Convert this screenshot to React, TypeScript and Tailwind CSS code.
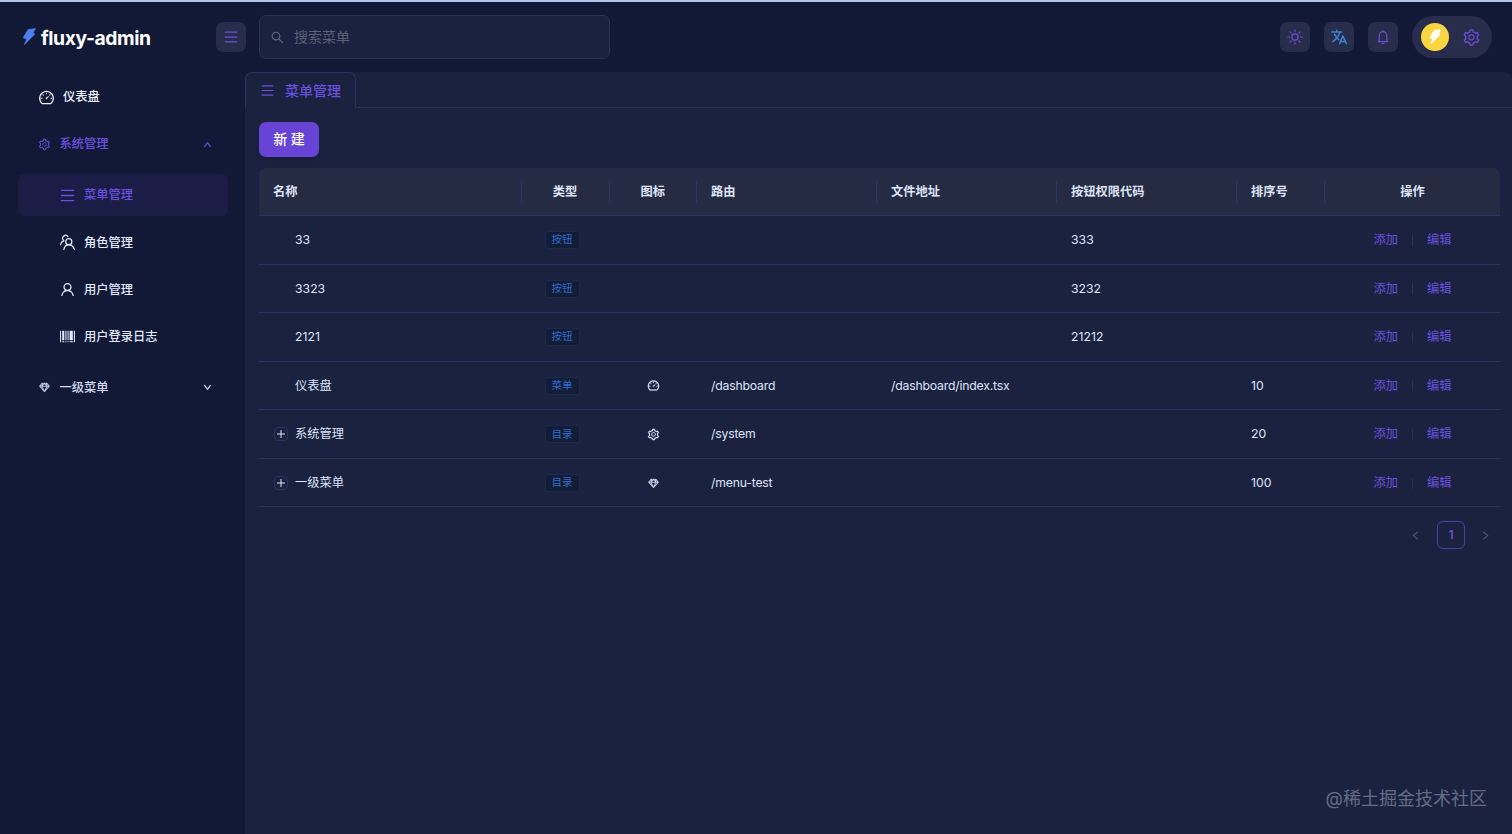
import React from 'react'
import { clsx } from 'clsx'
import {
    AiOutlineBarcode,
    AiOutlineDashboard,
    AiOutlineDown,
    AiOutlineLeft,
    AiOutlineMenu,
    AiOutlineRight,
    AiOutlineSearch,
    AiOutlineSetting,
    AiOutlineSketch,
    AiOutlineUp,
    AiOutlineUser,
} from 'react-icons/ai'
import { IoLanguageOutline } from 'react-icons/io5'

interface IconProps {
    className?: string
}

interface MenuRow {
    name: string
    type: string
    icon?: React.ComponentType<IconProps>
    route?: string
    file?: string
    code?: string
    order?: number
    expandable?: boolean
}

const rows: MenuRow[] = [
    { name: '33', type: '按钮', code: '333' },
    { name: '3323', type: '按钮', code: '3232' },
    { name: '2121', type: '按钮', code: '21212' },
    { name: '仪表盘', type: '菜单', icon: AiOutlineDashboard, route: '/dashboard', file: '/dashboard/index.tsx', order: 10 },
    { name: '系统管理', type: '目录', icon: AiOutlineSetting, route: '/system', order: 20, expandable: true },
    { name: '一级菜单', type: '目录', icon: AiOutlineSketch, route: '/menu-test', order: 100, expandable: true },
]

const columns = [
    { title: '名称', align: 'pl-[14px]' },
    { title: '类型', align: 'text-center' },
    { title: '图标', align: 'text-center' },
    { title: '路由', align: 'pl-[14px]' },
    { title: '文件地址', align: 'pl-[14px]' },
    { title: '按钮权限代码', align: 'pl-[14px]' },
    { title: '排序号', align: 'pl-[14px]' },
    { title: '操作', align: 'text-center' },
]

const gridCols = 'grid grid-cols-[262.5px_88px_87.5px_180px_180px_180px_88px_1fr] items-center'

const BoltIcon: React.FC<IconProps> = ({ className }) => (
    <svg viewBox="0 0 14 18" fill="currentColor" stroke="currentColor" strokeWidth="0.5" strokeLinejoin="round" className={className}>
        <path d="M6 1.4 13.6.6 11 5.3 13 6.1 2 17 4.7 11.3 1.2 9.8Z" />
    </svg>
)

const RoleIcon: React.FC<IconProps> = ({ className }) => (
    <svg viewBox="0 0 16 16" fill="none" stroke="currentColor" strokeWidth="1.2" strokeLinecap="round" className={className}>
        <circle cx="9.2" cy="7.2" r="2.9" />
        <path d="M4.6 14.6c.4-2.700 2.200-4.400 4.600-4.400s4.400 1.700 5.400 4.400" />
        <path d="M8.400 2.400A2.600 2.600 0 1 0 4 5.700L4.500 6.400C2.800 7 1.700 8.200 1.400 9.900" />
    </svg>
)

const SunIcon: React.FC<IconProps> = ({ className }) => (
    <svg viewBox="0 0 16 16" fill="none" stroke="currentColor" strokeWidth="1.2" strokeLinecap="round" className={className}>
        <circle cx="8" cy="8" r="3.1" />
        <path d="M8 .8v1.800M8 13.400v1.800M.8 8h1.800M13.400 8h1.800M2.900 2.900l1.300 1.300M11.800 11.800l1.300 1.300M2.900 13.100l1.300-1.300M11.800 4.200l1.300-1.300" />
    </svg>
)

const BellIcon: React.FC<IconProps> = ({ className }) => (
    <svg viewBox="0 0 16 16" fill="none" stroke="currentColor" strokeWidth="1.2" strokeLinejoin="round" strokeLinecap="round" className={className}>
        <path d="M3.200 12.700h9.600M4.200 12.500V6.500a3.800 3.800 0 0 1 7.600 0v6M8 2.500V1.700M7 14.500h2" />
    </svg>
)

const IconButton: React.FC<{ children: React.ReactNode }> = ({ children }) => (
    <button className="flex size-[30px] items-center justify-center rounded-[7px] bg-[#282d4b] text-[#6b4fde]">
        {children}
    </button>
)

const Header = () => (
    <header className="flex h-[70px] shrink-0 items-center pr-[20px]">
        <div className="flex w-[215.5px] items-center pl-[22px]">
            <BoltIcon className="h-[18px] w-[14px] text-[#4d80f0]" />
            <h1 className="ml-[5px] pt-px text-[19.3px] leading-6 font-bold tracking-[-0.4px] text-white">fluxy-admin</h1>
        </div>
        <IconButton>
            <AiOutlineMenu className="size-4" />
        </IconButton>
        <div className="ml-[13.5px] flex h-[44px] w-[351px] items-center rounded-[7px] border border-[#2b3150] bg-[#1a223f] pl-[10px]">
            <AiOutlineSearch className="size-[15px] text-[#62667a]" />
            <span className="ml-[9px] text-sm text-[#5c6075]">搜索菜单</span>
        </div>
        <div className="ml-auto flex items-center gap-[14px]">
            <IconButton>
                <SunIcon className="size-4" />
            </IconButton>
            <IconButton>
                <IoLanguageOutline className="size-[18px] text-[#3d84d2] [&_path]:[stroke-width:42]" />
            </IconButton>
            <IconButton>
                <BellIcon className="size-4" />
            </IconButton>
            <div className="flex h-[42px] w-[80px] items-center rounded-full bg-[#282d4b] pl-[9px]">
                <div className="flex size-7 items-center justify-center rounded-full bg-[#fbd541]">
                    <BoltIcon className="h-4 w-3 stroke-1 text-white" />
                </div>
                <AiOutlineSetting className="ml-[13px] size-[19px] text-[#6b4fde]" />
            </div>
        </div>
    </header>
)

interface MenuItemProps {
    icon: React.ComponentType<IconProps>
    label: string
    active?: boolean
}

const SubMenuItem: React.FC<MenuItemProps> = ({ icon: Icon, label, active }) => (
    <li
        className={clsx(
            'flex h-[42px] items-center rounded-[7px] pl-[41px]',
            active ? 'bg-[#1b1d46] text-[#6b4fde]' : 'text-[#e1e6f8]'
        )}
    >
        <Icon className="size-[17px]" />
        <span className="ml-[8px] pt-px">{label}</span>
    </li>
)

const Sidebar = () => (
    <nav className="w-[245px] shrink-0 pr-[17px] pl-[18px] text-[12.25px] font-medium">
        <div className="mt-[4px] flex h-[42px] items-center pl-5 text-[#f0f3fd]">
            <AiOutlineDashboard className="size-[17px]" />
            <span className="ml-[8px] pt-px">仪表盘</span>
        </div>
        <div className="mt-[5.5px] flex h-[42px] items-center pl-5 text-[#6b4fde]">
            <AiOutlineSetting className="size-[13px]" />
            <span className="ml-[8.5px]">系统管理</span>
            <AiOutlineUp className="mr-[16px] ml-auto size-[9px] stroke-[60]" />
        </div>
        <ul className="mt-[8.5px] flex flex-col gap-[5.3px]">
            <SubMenuItem icon={AiOutlineMenu} label="菜单管理" active />
            <SubMenuItem icon={RoleIcon} label="角色管理" />
            <SubMenuItem icon={AiOutlineUser} label="用户管理" />
            <SubMenuItem icon={AiOutlineBarcode} label="用户登录日志" />
        </ul>
        <div className="mt-[8.5px] flex h-[42px] items-center pl-5 text-[#d5dbf3]">
            <AiOutlineSketch className="size-[13px] stroke-[20]" />
            <span className="ml-[8.5px] pt-px">一级菜单</span>
            <AiOutlineDown className="mr-[16px] ml-auto size-[9px] stroke-[70]" />
        </div>
    </nav>
)

const TableRow: React.FC<{ row: MenuRow }> = ({ row }) => {
    const Icon = row.icon
    return (
        <div className={clsx(gridCols, 'h-[48.55px] border-b border-[#2a3263] pt-px')}>
            <div className="flex items-center pl-[15px]">
                <div className="flex w-[21px] items-center">
                    {row.expandable && (
                        <span className="flex size-[14px] items-center justify-center rounded-[4px] border border-[#2b3260]">
                            <svg viewBox="0 0 8 8" stroke="currentColor" strokeWidth="1" className="size-2">
                                <path d="M4 0v8M0 4h8" />
                            </svg>
                        </span>
                    )}
                </div>
                <span>{row.name}</span>
            </div>
            <div className="flex justify-center pr-[7px]">
                <span className="flex h-[18px] items-center rounded-[3px] border border-[#1a2a4b] bg-[#141d36] px-[6px] text-[10.5px] text-[#2e6bd0]">
                    {row.type}
                </span>
            </div>
            <div className="flex justify-center">{Icon && <Icon className="size-[13px] stroke-[16]" />}</div>
            <div className="pl-[14px] tracking-[-0.2px]">{row.route}</div>
            <div className="pl-[14px] tracking-[-0.2px]">{row.file}</div>
            <div className="pl-[14px]">{row.code}</div>
            <div className="pl-[14px]">{row.order}</div>
            <div className="flex items-center justify-center text-[#6b4fde]">
                <a>添加</a>
                <span className="mx-[14px] h-[11px] w-px bg-[#2a2f58]" />
                <a>编辑</a>
            </div>
        </div>
    )
}

const MenuTable = () => (
    <div className="mt-[11px] w-[1241px] text-[12.25px] text-[#dfe4f8]">
        <div className={clsx(gridCols, 'h-[48px] rounded-t-[7px] border-b border-[#2a3263] bg-[#242b43] font-semibold')}>
            {columns.map((column, index) => (
                <div
                    key={column.title}
                    className={clsx(
                        'h-[22px] leading-[22px]',
                        column.align,
                        index < columns.length - 1 && 'border-r border-[#2c3468]'
                    )}
                >
                    {column.title}
                </div>
            ))}
        </div>
        {rows.map((row) => (
            <TableRow key={row.name} row={row} />
        ))}
    </div>
)

const Pagination = () => (
    <div className="mt-[14px] flex w-[1241px] items-center justify-end text-[#5d627c]">
        <AiOutlineLeft className="size-[11px]" />
        <span className="mr-[15px] ml-[16px] flex size-[28px] items-center justify-center rounded-[6px] border border-[#4a3fa8] text-[12.25px] font-semibold text-[#6b4fde]">
            1
        </span>
        <AiOutlineRight className="mr-[9px] size-[11px]" />
    </div>
)

const App = () => (
    <div className="relative flex h-[834px] w-[1512px] flex-col overflow-hidden border-t-2 border-[#b3c5ee] bg-[#111936] font-[Inter,'Noto_Sans_CJK_SC',sans-serif]">
        <Header />
        <div className="flex min-h-0 flex-1">
            <Sidebar />
            <main className="min-w-0 flex-1 rounded-t-[7px] bg-[#1a223f]">
                {/* 标签栏 */}
                <div className="flex h-[36px]">
                    <div className="flex w-[111px] items-center rounded-t-[7px] border border-b-0 border-[#2a3263] pl-[14px] text-sm font-medium text-[#6b4fde]">
                        <AiOutlineMenu className="size-[15px]" />
                        <span className="ml-[10px]">菜单管理</span>
                    </div>
                    <div className="flex-1 border-b border-[#2a3263]" />
                </div>
                <div className="pt-[14px] pl-[14px]">
                    <button className="flex h-[35px] w-[60px] items-center justify-center rounded-[7px] bg-[#6744d6] pb-px text-sm font-medium text-white shadow-md">
                        新 建
                    </button>
                    <MenuTable />
                    <Pagination />
                </div>
            </main>
        </div>
        {/* 水印 */}
        <div className="absolute right-[25px] bottom-[22px] text-[18px] leading-[27px] text-[#666c84]">@稀土掘金技术社区</div>
    </div>
)

export default App
